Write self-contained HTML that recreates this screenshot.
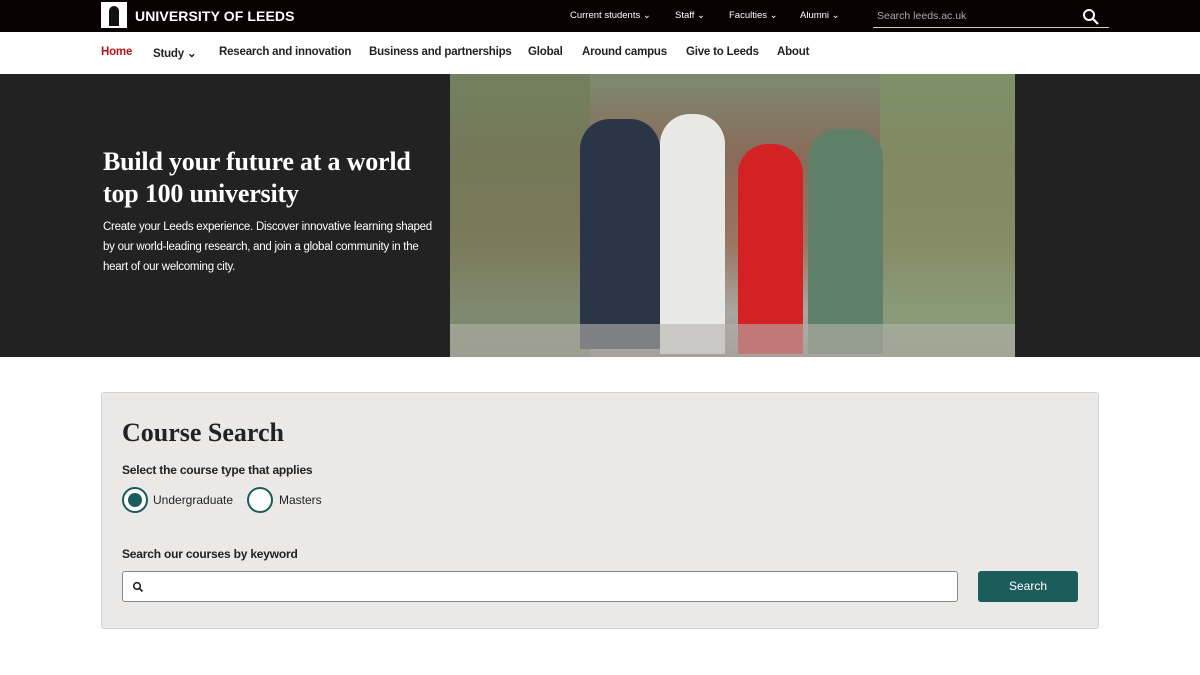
<!DOCTYPE html>
<html><head><meta charset="utf-8"><style>
*{margin:0;padding:0;box-sizing:border-box}
body{width:1200px;height:675px;background:#fff;font-family:"Liberation Sans",sans-serif;position:relative;overflow:hidden}
.top{position:absolute;left:0;top:0;width:1200px;height:32px;background:#080203}
.logo{position:absolute;left:101px;top:2px;width:26px;height:26px;background:#fff}
.logo i{position:absolute;left:8px;top:4px;width:10px;height:20px;background:#111;border-radius:5px 5px 0 0}
.brand{position:absolute;left:135px;top:8px;color:#fff;font-weight:bold;font-size:14px;letter-spacing:.1px}
.tl{position:absolute;top:10px;color:#fff;font-size:9.5px}
.srch{position:absolute;left:873px;top:6px;width:236px;height:22px;border-bottom:1px solid #ccc;color:#aaa;font-size:10.5px;padding:4px 4px}
.nav{position:absolute;top:46px;font-size:11.5px;color:#222;font-weight:bold;letter-spacing:-.2px}
.hero{position:absolute;left:0;top:74px;width:1200px;height:283px;background:#222}
.photo{position:absolute;left:450px;top:74px;width:565px;height:283px;background:linear-gradient(180deg,#7c8a70 0%,#8a6a58 30%,#9a7662 60%,#a9a7a4 85%,#8d8b88 100%);overflow:hidden}
h1{position:absolute;left:103px;top:146px;color:#fff;font-family:"Liberation Serif",serif;font-size:26px;line-height:32px;font-weight:bold;letter-spacing:-.2px}
.hp{position:absolute;left:103px;top:217px;width:340px;color:#fff;font-size:11.5px;line-height:20px;letter-spacing:-.25px}
.box{position:absolute;left:101px;top:392px;width:998px;height:237px;background:#ebe9e7;border:1px solid #d5d3d1;border-radius:3px}
h2{position:absolute;left:122px;top:418px;font-family:"Liberation Serif",serif;font-size:26px;color:#222;font-weight:bold}
.lbl{position:absolute;left:122px;font-size:12px;font-weight:bold;color:#222;letter-spacing:-.2px}
.rad{position:absolute;top:487px;width:26px;height:26px;border:2px solid #1b5d5b;border-radius:50%;background:#fff}
.rt{position:absolute;top:493px;font-size:12px;color:#222}
.inp{position:absolute;left:122px;top:571px;width:836px;height:31px;background:#fff;border:1px solid #888;border-radius:3px}
.btn{position:absolute;left:978px;top:571px;width:100px;height:31px;background:#1b5d5b;border-radius:3px;color:#fff;font-size:12px;text-align:center;line-height:31px}
</style></head><body>
<div class="top"><div class="logo"><i></i></div><div class="brand">UNIVERSITY OF LEEDS</div>
<div class="tl" style="left:570px">Current students ⌄</div><div class="tl" style="left:675px">Staff ⌄</div><div class="tl" style="left:729px">Faculties ⌄</div><div class="tl" style="left:800px">Alumni ⌄</div>
<div class="srch">Search leeds.ac.uk</div>
<svg style="position:absolute;left:1082px;top:8px" width="17" height="17" viewBox="0 0 17 17"><circle cx="7" cy="7" r="5" fill="none" stroke="#fff" stroke-width="2"/><path d="M11 11l5 5" stroke="#fff" stroke-width="2.2"/></svg></div>
<div class="nav" style="left:101px;color:#b5121b">Home</div><div class="nav" style="left:153px">Study ⌄</div><div class="nav" style="left:219px">Research and innovation</div><div class="nav" style="left:369px">Business and partnerships</div><div class="nav" style="left:528px">Global</div><div class="nav" style="left:582px">Around campus</div><div class="nav" style="left:686px">Give to Leeds</div><div class="nav" style="left:777px">About</div>
<div class="hero"></div>
<div class="photo">
<div style="position:absolute;left:0;top:0;width:140px;height:283px;background:#6e7d58;opacity:.7"></div>
<div style="position:absolute;left:430px;top:0;width:135px;height:283px;background:#7d9566;opacity:.7"></div>
<div style="position:absolute;left:130px;top:45px;width:80px;height:230px;background:#2b3548;border-radius:30px 30px 0 0"></div>
<div style="position:absolute;left:210px;top:40px;width:65px;height:240px;background:#e8e8e6;border-radius:30px 30px 0 0"></div>
<div style="position:absolute;left:288px;top:70px;width:65px;height:210px;background:#d42124;border-radius:30px 30px 0 0"></div>
<div style="position:absolute;left:358px;top:55px;width:75px;height:225px;background:#5f7f68;border-radius:30px 30px 0 0"></div>
<div style="position:absolute;left:0;top:250px;width:565px;height:33px;background:#b6b3ae;opacity:.6"></div>
</div>
<h1>Build your future at a world<br>top 100 university</h1>
<div class="hp">Create your Leeds experience. Discover innovative learning shaped by our world-leading research, and join a global community in the heart of our welcoming city.</div>
<div class="box"></div>
<h2>Course Search</h2>
<div class="lbl" style="top:463px">Select the course type that applies</div>
<div class="rad" style="left:122px"><div style="position:absolute;left:4px;top:4px;width:14px;height:14px;border-radius:50%;background:#1b5d5b"></div></div>
<div class="rt" style="left:153px">Undergraduate</div>
<div class="rad" style="left:247px"></div><div class="rt" style="left:279px">Masters</div>
<div class="lbl" style="top:547px">Search our courses by keyword</div>
<div class="inp"><svg style="position:absolute;left:9px;top:9px" width="12" height="12" viewBox="0 0 12 12"><circle cx="5" cy="5" r="3.3" fill="none" stroke="#222" stroke-width="1.6"/><path d="M7.5 7.5l3 3" stroke="#222" stroke-width="1.8"/></svg></div>
<div class="btn">Search</div>
</body></html>
